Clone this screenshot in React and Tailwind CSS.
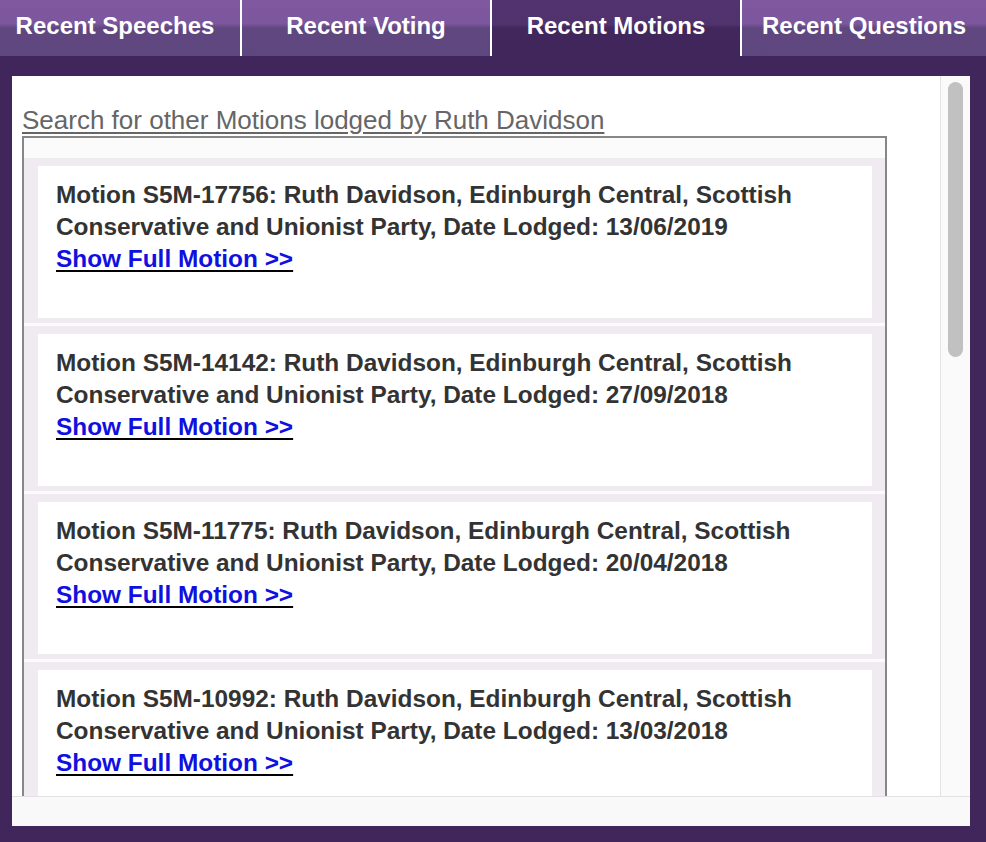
const tabs = [
  { label: "Recent Speeches", width: "w-[240px]", active: false, first: true },
  { label: "Recent Voting", width: "w-[250px]", active: false },
  { label: "Recent Motions", width: "w-[250px]", active: true },
  { label: "Recent Questions", width: "w-[246px]", active: false },
];

const motions = [
  { id: "S5M-17756", date: "13/06/2019" },
  { id: "S5M-14142", date: "27/09/2018" },
  { id: "S5M-11775", date: "20/04/2018" },
  { id: "S5M-10992", date: "13/03/2018" },
];

function Tab({ tab }) {
  return (
    <div
      className={`${tab.width} h-14 flex items-center justify-center ${tab.first ? "pr-[10px]" : "border-l-2 border-white"} ${
        tab.active
          ? "bg-[linear-gradient(to_bottom,#52336f_0%,#50326d_44%,#41275b_50%,#40265a_100%)]"
          : "bg-[linear-gradient(to_bottom,#7f58a0_0%,#7c579d_42%,#60477f_50%,#5e4680_100%)]"
      }`}
    >
      <span className="text-white font-bold text-[24px] leading-7 pb-[5px]">{tab.label}</span>
    </div>
  );
}

function MotionRow({ motion }) {
  return (
    <div className="bg-[#efebf0] pl-[14px] pr-[13px] pt-[8px] pb-[5px] mb-[3px]">
      <div className="bg-white h-[152px] pl-[18px] pr-4 pt-[13px] text-[24.4px] leading-[32px] font-bold text-[#333333]">
        <p>
          Motion {motion.id}: Ruth Davidson, Edinburgh Central, Scottish Conservative and Unionist Party, Date Lodged:{" "}
          {motion.date}
        </p>
        <a href="#" className="text-[#1010e0] underline decoration-black decoration-2 underline-offset-[3px]">
          Show Full Motion &gt;&gt;
        </a>
      </div>
    </div>
  );
}

export default function App() {
  return (
    <div className="w-[986px] h-[842px] bg-[#40265a] overflow-hidden font-['Liberation_Sans',Arial,sans-serif]">
      <div className="flex">
        {tabs.map((t) => (
          <Tab key={t.label} tab={t} />
        ))}
      </div>

      <div className="ml-[12px] mt-[20px] w-[958px] h-[750px] bg-[#f9f9f9] flex flex-col">
        <div className="flex h-[720px]">
          <div className="w-[928px] h-full bg-white overflow-hidden pl-[10px] pt-[30px]">
            <a href="#" className="block h-[28px] text-[26px] leading-[28px] text-[#666666] underline underline-offset-[3px]">
              Search for other Motions lodged by Ruth Davidson
            </a>
            <div className="mt-[2px] w-[865px] border-2 border-[#878787] bg-[#fbfbfb] pt-[20px]">
              {motions.map((m) => (
                <MotionRow key={m.id} motion={m} />
              ))}
            </div>
          </div>
          <div className="w-[30px] h-full border-l border-[#e4e4e4] bg-[#fafafa] pt-[6px] pl-[7px]">
            <div className="w-[15px] h-[275px] rounded-full bg-[#c1c1c1]" />
          </div>
        </div>
        <div className="flex-1 border-t border-[#e2e2e2] bg-[#f9f9f9]" />
      </div>
    </div>
  );
}
